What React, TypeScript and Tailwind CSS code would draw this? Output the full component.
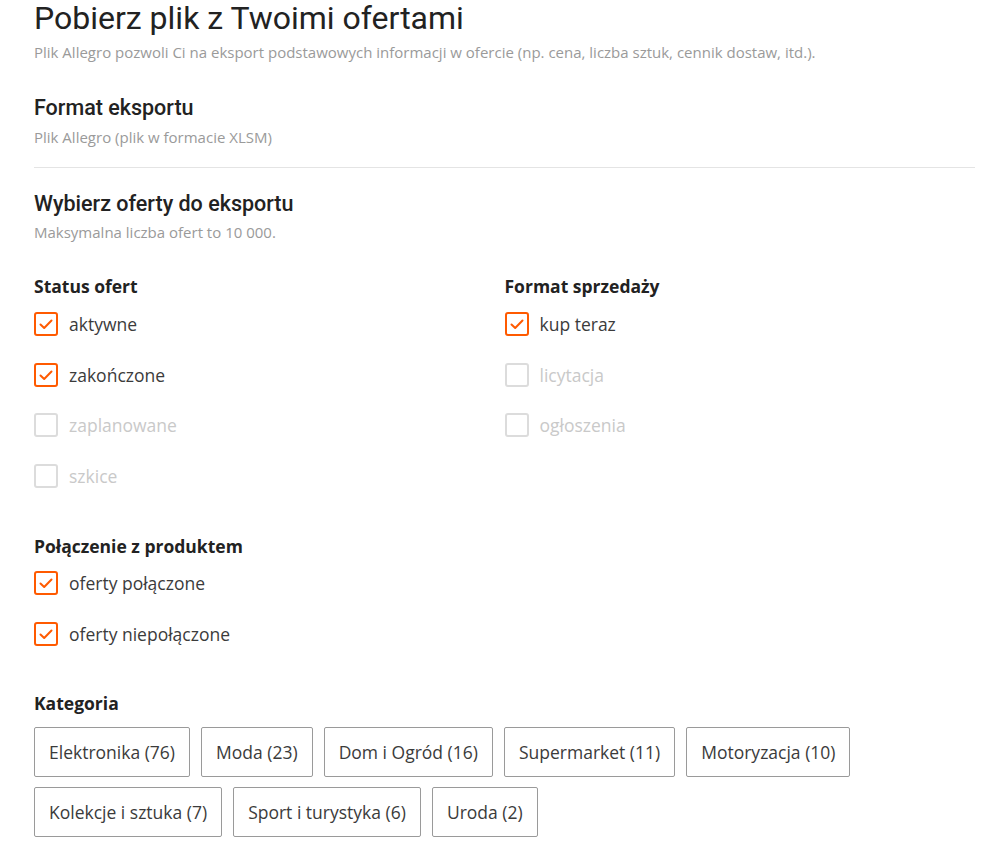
import React, { useState } from "react";

interface CheckItem {
  id: string;
  label: string;
  checked: boolean;
  disabled?: boolean;
}

const STATUS_ITEMS: CheckItem[] = [
  { id: "active", label: "aktywne", checked: true },
  { id: "ended", label: "zakończone", checked: true },
  { id: "planned", label: "zaplanowane", checked: false, disabled: true },
  { id: "drafts", label: "szkice", checked: false, disabled: true },
];

const SALE_FORMAT_ITEMS: CheckItem[] = [
  { id: "buy-now", label: "kup teraz", checked: true },
  { id: "auction", label: "licytacja", checked: false, disabled: true },
  { id: "ads", label: "ogłoszenia", checked: false, disabled: true },
];

const PRODUCT_ITEMS: CheckItem[] = [
  { id: "linked", label: "oferty połączone", checked: true },
  { id: "unlinked", label: "oferty niepołączone", checked: true },
];

const CATEGORIES = [
  "Elektronika (76)",
  "Moda (23)",
  "Dom i Ogród (16)",
  "Supermarket (11)",
  "Motoryzacja (10)",
  "Kolekcje i sztuka (7)",
  "Sport i turystyka (6)",
  "Uroda (2)",
];

const Checkbox: React.FC<{ item: CheckItem }> = ({ item }) => {
  const [checked, setChecked] = useState(item.checked);

  return (
    <label
      className={`flex items-center gap-[11px] h-6 ${item.disabled ? "cursor-default" : "cursor-pointer"}`}
      onClick={() => !item.disabled && setChecked(!checked)}
    >
      <span
        className={`w-6 h-6 rounded-[3px] border-2 flex items-center justify-center ${
          checked ? "border-[#ff5a00]" : "border-[#dcdcdc]"
        }`}
      >
        {checked ? (
          <svg width="16" height="16" viewBox="0 0 16 16" fill="none">
            <path d="M2.5 8.5 L6.2 12 L13.5 4.5" stroke="#ff5a00" strokeWidth="2" strokeLinecap="round" strokeLinejoin="round" />
          </svg>
        ) : null}
      </span>
      <span className={`text-[17.5px] leading-6 ${item.disabled ? "text-[#c9c9c9]" : "text-[#3b3b3b]"}`}>
        {item.label}
      </span>
    </label>
  );
};

const CheckGroup: React.FC<{ title: string; items: CheckItem[] }> = ({ title, items }) => (
  <div>
    <h3 className="text-[17.5px] leading-6 font-bold text-[#222]">{title}</h3>
    <div className="flex flex-col mt-[14px] gap-[26.6px]">
      {items.map((item) => (
        <Checkbox key={item.id} item={item} />
      ))}
    </div>
  </div>
);

export default function App() {
  const [selectedCategory, setSelectedCategory] = useState<string | null>(null);

  return (
    <div className="min-h-[850px] bg-white font-['Open_Sans',sans-serif] text-[#222]">
      <div className="pl-[34px] pr-[24px]">
        <h1 className="font-['Roboto',sans-serif] text-[32px] leading-9 text-[#222]">
          Pobierz plik z Twoimi ofertami
        </h1>
        <p className="mt-[7px] text-[15px] leading-[18px] text-[#9a9a9a]">
          Plik Allegro pozwoli Ci na eksport podstawowych informacji w ofercie (np. cena, liczba sztuk, cennik dostaw, itd.).
        </p>

        <h2 className="mt-[33px] font-['Roboto',sans-serif] font-medium text-[21.5px] leading-7 text-[#222]">
          Format eksportu
        </h2>
        <p className="mt-[6px] text-[15px] leading-[18px] text-[#9a9a9a]">Plik Allegro (plik w formacie XLSM)</p>

        <div className="mt-[21px] h-px bg-[#e4e4e4]" />

        <h2 className="mt-[22px] font-['Roboto',sans-serif] font-medium text-[21.5px] leading-7 text-[#222]">
          Wybierz oferty do eksportu
        </h2>
        <p className="mt-[5px] text-[15px] leading-[18px] text-[#9a9a9a]">Maksymalna liczba ofert to 10 000.</p>

        <div className="mt-[33px] grid grid-cols-2">
          <CheckGroup title="Status ofert" items={STATUS_ITEMS} />
          <CheckGroup title="Format sprzedaży" items={SALE_FORMAT_ITEMS} />
        </div>

        <div className="mt-[46px]">
          <h3 className="text-[17.5px] leading-6 font-bold text-[#222]">Połączenie z produktem</h3>
          <div className="flex flex-col mt-[13px] gap-[27px]">
            {PRODUCT_ITEMS.map((item) => (
              <Checkbox key={item.id} item={item} />
            ))}
          </div>
        </div>

        <div className="mt-[45px]">
          <h3 className="text-[17.5px] leading-6 font-bold text-[#222]">Kategoria</h3>
          <div className="mt-[12px] flex flex-wrap gap-x-[11px] gap-y-[10px] max-w-[860px]">
            {CATEGORIES.map((category) => (
              <button
                key={category}
                type="button"
                onClick={() => setSelectedCategory(category)}
                className={`h-[50px] px-[14px] rounded-[2px] border text-[17.5px] text-[#3b3b3b] bg-white ${
                  selectedCategory === category ? "border-[#ff5a00]" : "border-[#9a9a9a]"
                }`}
              >
                {category}
              </button>
            ))}
          </div>
        </div>
      </div>
    </div>
  );
}
